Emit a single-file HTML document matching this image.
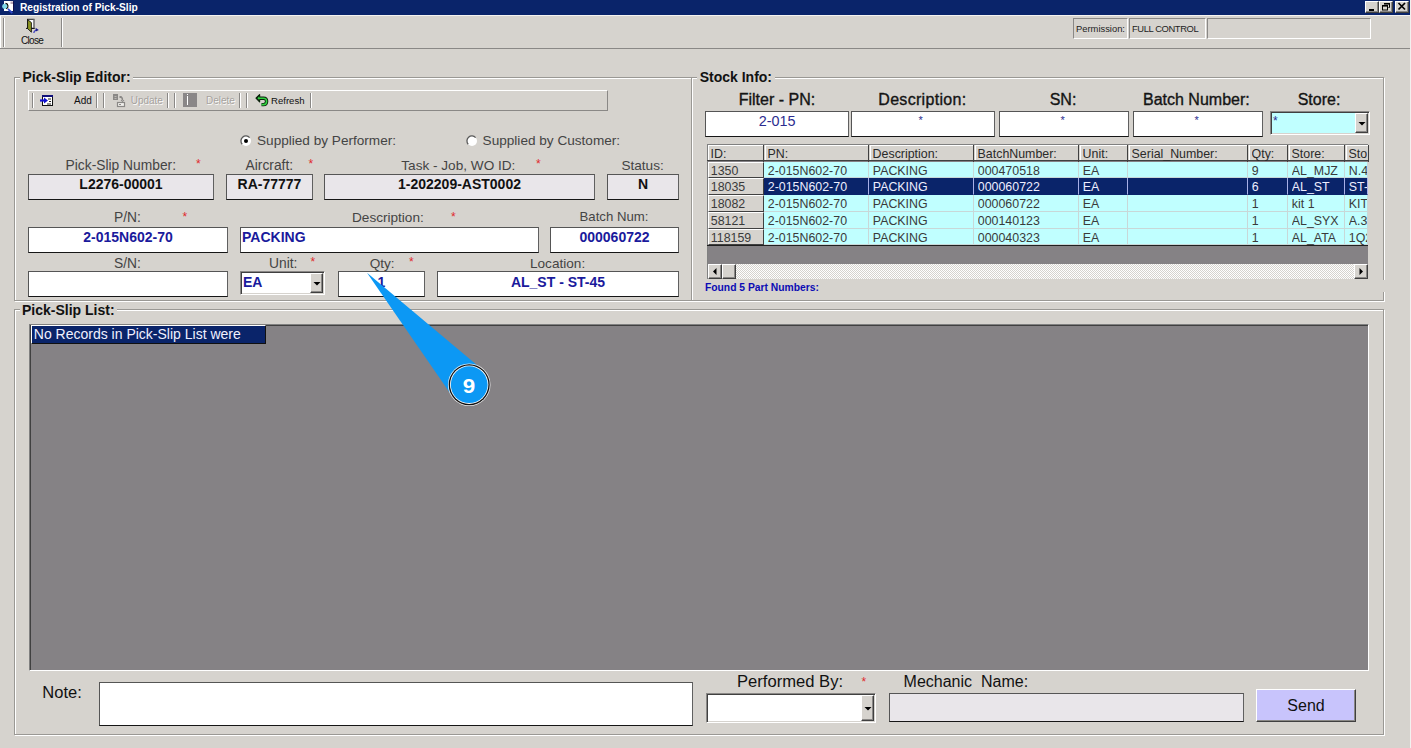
<!DOCTYPE html>
<html><head><meta charset="utf-8"><title>Registration of Pick-Slip</title>
<style>
html,body{margin:0;padding:0;}
body{width:1411px;height:748px;overflow:hidden;background:#d6d3ce;position:relative;font-family:"Liberation Sans",sans-serif;}
.a{position:absolute;}
.t{position:absolute;white-space:nowrap;font-family:"Liberation Sans",sans-serif;}
</style></head><body>

<div class="a" style="left:0px;top:0px;width:1410px;height:15px;background:#0a246a"></div>
<div class="a" style="left:1410px;top:0px;width:1px;height:748px;background:#f2f1ef"></div>
<svg class="a" style="left:0px;top:0px" width="16" height="15">
<rect x="4" y="1" width="9" height="10" fill="#fff"/>
<rect x="13" y="1.5" width="1" height="10" fill="#10104a"/>
<rect x="10.5" y="1.5" width="2.5" height="2.5" fill="#b8a8b8"/>
<circle cx="4.8" cy="6.3" r="2.6" fill="#80d8e8"/>
<path d="M5.5 3.4 A2.8 2.8 0 0 1 6.2 8.8" fill="none" stroke="#000" stroke-width="1.1"/>
<path d="M8 8.8 L12.3 13.2" stroke="#3048c8" stroke-width="1.8"/>
</svg>
<div class="t" style="left:20.00px;top:0.87px;font-size:10.2px;line-height:13px;color:#fff;font-weight:bold;">Registration of Pick-Slip</div>
<div class="a" style="left:1365px;top:1px;width:14px;height:12px;box-sizing:border-box;border:1px solid #fff;border-right-color:#404040;border-bottom-color:#404040;background:#d6d3ce;box-shadow:inset -1px -1px 0 #8a8886"></div>
<div class="a" style="left:1379px;top:1px;width:14px;height:12px;box-sizing:border-box;border:1px solid #fff;border-right-color:#404040;border-bottom-color:#404040;background:#d6d3ce;box-shadow:inset -1px -1px 0 #8a8886"></div>
<div class="a" style="left:1395px;top:1px;width:14px;height:12px;box-sizing:border-box;border:1px solid #fff;border-right-color:#404040;border-bottom-color:#404040;background:#d6d3ce;box-shadow:inset -1px -1px 0 #8a8886"></div>
<div class="a" style="left:1369px;top:9px;width:5px;height:2px;background:#000"></div>
<svg class="a" style="left:1379px;top:0px" width="14" height="13">
<path d="M5.5 3.5 h5 v4 h-1" fill="none" stroke="#000" stroke-width="1"/>
<rect x="5" y="3" width="6" height="1.6" fill="#000"/>
<rect x="3.5" y="5.5" width="5" height="4.5" fill="none" stroke="#000" stroke-width="1"/>
<rect x="3" y="5" width="6" height="1.6" fill="#000"/>
</svg>
<svg class="a" style="left:1395px;top:0px" width="14" height="13">
<path d="M3.5 3 L10 9.5 M10 3 L3.5 9.5" stroke="#000" stroke-width="1.7"/>
</svg>
<div class="a" style="left:0px;top:15px;width:1410px;height:1px;background:#f4f3f1"></div>
<div class="a" style="left:0px;top:16px;width:1px;height:32px;background:#fff"></div>
<div class="a" style="left:0px;top:48px;width:1410px;height:1px;background:#8a8886"></div>
<div class="a" style="left:3px;top:18px;width:1px;height:29px;background:#8a8886"></div>
<div class="a" style="left:4px;top:18px;width:1px;height:29px;background:#fff"></div>
<div class="a" style="left:61px;top:18px;width:1px;height:29px;background:#8a8886"></div>
<div class="a" style="left:62px;top:18px;width:1px;height:29px;background:#fff"></div>
<svg class="a" style="left:20px;top:16px" width="22" height="20">
<rect x="7.5" y="3.3" width="6.5" height="9" fill="#fff" stroke="#222" stroke-width="1"/>
<rect x="13" y="3.5" width="1.6" height="9" fill="#8a8a8a"/>
<path d="M6 12.4 H14.6" stroke="#111" stroke-width="1"/>
<path d="M7.6 3.6 L11.4 6.6 L11.4 16.2 L7.6 12.6 Z" fill="#8e9624" stroke="#111" stroke-width="0.9" stroke-linejoin="round"/>
<path d="M13.8 17 Q14.2 14.2 17 13.8" fill="none" stroke="#4848c0" stroke-width="1.3"/>
<path d="M15.6 11.8 L18.8 13.9 L15.8 15.6 Z" fill="#1c1c8c"/>
</svg>
<div class="t" style="left:21.00px;top:35.14px;font-size:10px;line-height:12px;color:#111;letter-spacing:-0.7px;">Close</div>
<div class="a" style="left:1073px;top:18px;width:55px;height:21px;box-sizing:border-box;border:1px solid #fff;border-top-color:#8a8886;border-left-color:#8a8886"></div>
<div class="a" style="left:1129px;top:18px;width:77px;height:21px;box-sizing:border-box;border:1px solid #fff;border-top-color:#8a8886;border-left-color:#8a8886"></div>
<div class="a" style="left:1207px;top:18px;width:164px;height:21px;box-sizing:border-box;border:1px solid #fff;border-top-color:#8a8886;border-left-color:#8a8886"></div>
<div class="t" style="left:1076.00px;top:23.24px;font-size:9.4px;line-height:12px;color:#222;">Permission:</div>
<div class="t" style="left:1132.00px;top:23.24px;font-size:9.4px;line-height:12px;color:#222;letter-spacing:-0.4px;">FULL CONTROL</div>
<div class="a" style="left:15px;top:78px;width:678px;height:224px;box-sizing:border-box;border:1px solid #fff"></div>
<div class="a" style="left:14px;top:77px;width:678px;height:224px;box-sizing:border-box;border:1px solid #9a9894"></div>
<div class="a" style="left:20px;top:70px;width:113px;height:14px;background:#d6d3ce"></div>
<div class="t" style="left:22.50px;top:67.65px;font-size:14px;line-height:18px;color:#111;font-weight:bold;">Pick-Slip Editor:</div>
<div class="a" style="left:28px;top:90px;width:580px;height:21px;box-sizing:border-box;border:1px solid #fff;border-right-color:#8a8886;border-bottom-color:#8a8886"></div>
<div class="a" style="left:32px;top:93px;width:1px;height:15px;background:#8a8886"></div>
<div class="a" style="left:33px;top:93px;width:1px;height:15px;background:#fff"></div>
<div class="a" style="left:96px;top:93px;width:1px;height:15px;background:#8a8886"></div>
<div class="a" style="left:97px;top:93px;width:1px;height:15px;background:#fff"></div>
<div class="a" style="left:103px;top:93px;width:1px;height:15px;background:#8a8886"></div>
<div class="a" style="left:104px;top:93px;width:1px;height:15px;background:#fff"></div>
<div class="a" style="left:167px;top:93px;width:1px;height:15px;background:#8a8886"></div>
<div class="a" style="left:168px;top:93px;width:1px;height:15px;background:#fff"></div>
<div class="a" style="left:174px;top:93px;width:1px;height:15px;background:#8a8886"></div>
<div class="a" style="left:175px;top:93px;width:1px;height:15px;background:#fff"></div>
<div class="a" style="left:239px;top:93px;width:1px;height:15px;background:#8a8886"></div>
<div class="a" style="left:240px;top:93px;width:1px;height:15px;background:#fff"></div>
<div class="a" style="left:246px;top:93px;width:1px;height:15px;background:#8a8886"></div>
<div class="a" style="left:247px;top:93px;width:1px;height:15px;background:#fff"></div>
<div class="a" style="left:310px;top:93px;width:1px;height:15px;background:#8a8886"></div>
<div class="a" style="left:311px;top:93px;width:1px;height:15px;background:#fff"></div>
<svg class="a" style="left:39px;top:94px" width="16" height="13">
<rect x="3.5" y="1.5" width="10" height="10" fill="#fff" stroke="#111" stroke-width="1"/>
<rect x="3" y="1" width="11" height="2" fill="#10107a"/>
<path d="M9 5 h3 M10 7.5 h2 M8 10 h4" stroke="#222" stroke-width="1"/>
<path d="M1 6.5 H6" stroke="#1010d0" stroke-width="2.2"/>
<path d="M5 3.5 L9 6.5 L5 9.5 Z" fill="#1010d0"/>
</svg>
<div class="t" style="left:74.00px;top:95.33px;font-size:10px;line-height:12px;color:#111;">Add</div>
<svg class="a" style="left:110px;top:92px" width="18" height="16">
<rect x="3" y="2" width="5" height="6" fill="#8a8886"/>
<path d="M4.5 4.5 h2 M4.5 6.5 h2" stroke="#c8c4c0" stroke-width="0.8"/>
<rect x="9.5" y="4" width="2" height="2" fill="#8a8886"/>
<path d="M10.5 5 Q12.5 5 12.5 8.5" fill="none" stroke="#8a8886" stroke-width="1.4"/>
<path d="M11 8 L12.5 9.8 L14 8" fill="none" stroke="#8a8886" stroke-width="1"/>
<rect x="7.5" y="10.5" width="7" height="4" fill="#f0efec" stroke="#8a8886" stroke-width="1.2"/>
<path d="M9 12.5 h2" stroke="#8a8886" stroke-width="1"/>
</svg>
<div class="t" style="left:131.50px;top:95.83px;font-size:10px;line-height:12px;color:#fff;opacity:0.9">Update</div>
<div class="t" style="left:130.70px;top:95.03px;font-size:10px;line-height:12px;color:#a6a29e;">Update</div>
<div class="a" style="left:183px;top:93px;width:14px;height:14px;background:#8a8788"></div>
<div class="a" style="left:187px;top:96px;width:1px;height:9px;background:#fff"></div>
<div class="a" style="left:187px;top:94px;width:1px;height:1px;background:#fff"></div>
<div class="t" style="left:206.80px;top:95.83px;font-size:10px;line-height:12px;color:#fff;opacity:0.9">Delete</div>
<div class="t" style="left:206.00px;top:95.03px;font-size:10px;line-height:12px;color:#a6a29e;">Delete</div>
<svg class="a" style="left:252px;top:92px" width="18" height="16">
<path d="M7 6.2 H11.5 Q14.6 6.2 14.6 9.2 Q14.6 12.6 11.5 12.6 H9.5" fill="none" stroke="#0a200a" stroke-width="3.4"/>
<path d="M4 6.2 L7.6 2.6 L7.6 9.8 Z" fill="#0a200a" stroke="#0a200a" stroke-width="1.2" stroke-linejoin="round"/>
<path d="M7 6.2 H11.5 Q14.6 6.2 14.6 9.2 Q14.6 12.6 11.5 12.6 H9.5" fill="none" stroke="#30d040" stroke-width="1.6"/>
<path d="M5.4 6.2 L7.3 4.3 L7.3 8.1 Z" fill="#30d040"/>
</svg>
<div class="t" style="left:271.00px;top:95.17px;font-size:9.6px;line-height:12px;color:#111;">Refresh</div>
<svg class="a" style="left:240px;top:135px" width="12" height="12">
<circle cx="6" cy="6" r="5" fill="#fff"/>
<path d="M2.2 9.2 A4.6 4.6 0 0 1 9.6 2.6" fill="none" stroke="#5a5a5a" stroke-width="1.3"/>
<circle cx="6" cy="6" r="2" fill="#000"/>
</svg>
<svg class="a" style="left:466px;top:135px" width="12" height="12">
<circle cx="6" cy="6" r="5" fill="#fff"/>
<path d="M2.2 9.2 A4.6 4.6 0 0 1 9.6 2.6" fill="none" stroke="#5a5a5a" stroke-width="1.3"/>

</svg>
<div class="t" style="left:257.00px;top:132.09px;font-size:13.6px;line-height:17px;color:#444444;">Supplied by Performer:</div>
<div class="t" style="left:482.60px;top:132.09px;font-size:13.6px;line-height:17px;color:#444444;">Supplied by Customer:</div>
<div class="t" style="left:65.60px;top:156.72px;font-size:13.8px;line-height:17px;color:#444444;">Pick-Slip Number:</div>
<div class="t" style="left:196px;top:158px;font-size:12px;line-height:12px;color:#e0282c">*</div>
<div class="t" style="left:245.60px;top:156.72px;font-size:13.8px;line-height:17px;color:#444444;">Aircraft:</div>
<div class="t" style="left:308.5px;top:158px;font-size:12px;line-height:12px;color:#e0282c">*</div>
<div class="t" style="left:401.30px;top:156.79px;font-size:13.6px;line-height:17px;color:#444444;">Task - Job, WO ID:</div>
<div class="t" style="left:536px;top:158px;font-size:12px;line-height:12px;color:#e0282c">*</div>
<div class="t" style="left:621.40px;top:156.79px;font-size:13.6px;line-height:17px;color:#444444;">Status:</div>
<div class="a" style="left:28px;top:174px;width:186px;height:26px;box-sizing:border-box;border:1px solid #555;border-bottom-color:#161616;border-right-color:#606060;background:#e9e6ea;"></div>
<div class="a" style="left:226px;top:174px;width:87px;height:26px;box-sizing:border-box;border:1px solid #555;border-bottom-color:#161616;border-right-color:#606060;background:#e9e6ea;"></div>
<div class="a" style="left:324px;top:174px;width:271px;height:26px;box-sizing:border-box;border:1px solid #555;border-bottom-color:#161616;border-right-color:#606060;background:#e9e6ea;"></div>
<div class="a" style="left:607px;top:174px;width:72px;height:26px;box-sizing:border-box;border:1px solid #555;border-bottom-color:#161616;border-right-color:#606060;background:#e9e6ea;"></div>
<div class="t" style="left:28.00px;top:175.45px;font-size:14px;line-height:18px;color:#111;font-weight:bold;width:186.00px;text-align:center;">L2276-00001</div>
<div class="t" style="left:226.00px;top:175.45px;font-size:14px;line-height:18px;color:#111;font-weight:bold;width:87.00px;text-align:center;">RA-77777</div>
<div class="t" style="left:324.00px;top:175.45px;font-size:14px;line-height:18px;color:#111;font-weight:bold;width:271.00px;text-align:center;">1-202209-AST0002</div>
<div class="t" style="left:607.00px;top:175.45px;font-size:14px;line-height:18px;color:#111;font-weight:bold;width:72.00px;text-align:center;">N</div>
<div class="t" style="left:114.00px;top:208.72px;font-size:13.8px;line-height:17px;color:#444444;">P/N:</div>
<div class="t" style="left:182.5px;top:211px;font-size:12px;line-height:12px;color:#e0282c">*</div>
<div class="t" style="left:352.00px;top:208.79px;font-size:13.6px;line-height:17px;color:#444444;">Description:</div>
<div class="t" style="left:451px;top:211px;font-size:12px;line-height:12px;color:#e0282c">*</div>
<div class="t" style="left:579.50px;top:209.43px;font-size:13.2px;line-height:16px;color:#444444;">Batch Num:</div>
<div class="a" style="left:28px;top:227px;width:200px;height:26px;box-sizing:border-box;border:1px solid #555;border-bottom-color:#161616;border-right-color:#606060;background:#fff;"></div>
<div class="a" style="left:240px;top:227px;width:299px;height:26px;box-sizing:border-box;border:1px solid #555;border-bottom-color:#161616;border-right-color:#606060;background:#fff;"></div>
<div class="a" style="left:550px;top:227px;width:129px;height:26px;box-sizing:border-box;border:1px solid #555;border-bottom-color:#161616;border-right-color:#606060;background:#fff;"></div>
<div class="t" style="left:28.00px;top:227.95px;font-size:14px;line-height:18px;color:#1a1a9c;font-weight:bold;width:200.00px;text-align:center;">2-015N602-70</div>
<div class="t" style="left:242.00px;top:227.95px;font-size:14px;line-height:18px;color:#1a1a9c;font-weight:bold;">PACKING</div>
<div class="t" style="left:550.00px;top:227.95px;font-size:14px;line-height:18px;color:#1a1a9c;font-weight:bold;width:129.00px;text-align:center;">000060722</div>
<div class="t" style="left:114.00px;top:254.72px;font-size:13.8px;line-height:17px;color:#444444;">S/N:</div>
<div class="t" style="left:269.00px;top:254.72px;font-size:13.8px;line-height:17px;color:#444444;">Unit:</div>
<div class="t" style="left:310.5px;top:256px;font-size:12px;line-height:12px;color:#e0282c">*</div>
<div class="t" style="left:369.70px;top:254.79px;font-size:13.6px;line-height:17px;color:#444444;">Qty:</div>
<div class="t" style="left:409px;top:256px;font-size:12px;line-height:12px;color:#e0282c">*</div>
<div class="t" style="left:530.00px;top:254.79px;font-size:13.6px;line-height:17px;color:#444444;">Location:</div>
<div class="a" style="left:28px;top:271px;width:200px;height:26px;box-sizing:border-box;border:1px solid #555;border-bottom-color:#161616;border-right-color:#606060;background:#fff;"></div>
<div class="a" style="left:240px;top:271px;width:85px;height:24px;box-sizing:border-box;border:1px solid #fff;border-top-color:#8a8886;border-left-color:#8a8886;background:#fff;box-shadow:inset 1px 1px 0 #404040, inset -1px -1px 0 #d6d3ce"></div>
<div class="a" style="left:310px;top:273px;width:13px;height:20px;box-sizing:border-box;border:1px solid #fff;border-right-color:#404040;border-bottom-color:#404040;background:#d6d3ce;box-shadow:inset -1px -1px 0 #8a8886"></div>
<svg class="a" style="left:312.5px;top:280.5px" width="8" height="5"><path d="M0.5 1 H7.5 L4 4.5 Z" fill="#000"/></svg>
<div class="a" style="left:338px;top:271px;width:87px;height:26px;box-sizing:border-box;border:1px solid #555;border-bottom-color:#161616;border-right-color:#606060;background:#fff;"></div>
<div class="a" style="left:437px;top:271px;width:242px;height:26px;box-sizing:border-box;border:1px solid #555;border-bottom-color:#161616;border-right-color:#606060;background:#fff;"></div>
<div class="t" style="left:243.00px;top:272.95px;font-size:14px;line-height:18px;color:#1a1a9c;font-weight:bold;">EA</div>
<div class="t" style="left:338.00px;top:272.95px;font-size:14px;line-height:18px;color:#1a1a9c;font-weight:bold;width:87.00px;text-align:center;">1</div>
<div class="t" style="left:437.00px;top:272.95px;font-size:14px;line-height:18px;color:#1a1a9c;font-weight:bold;width:242.00px;text-align:center;">AL_ST - ST-45</div>
<div class="a" style="left:692px;top:78px;width:693px;height:224px;box-sizing:border-box;border:1px solid #fff"></div>
<div class="a" style="left:691px;top:77px;width:693px;height:224px;box-sizing:border-box;border:1px solid #9a9894"></div>
<div class="a" style="left:1382px;top:280px;width:3px;height:12px;background:#d6d3ce"></div>
<div class="a" style="left:697px;top:70px;width:78px;height:14px;background:#d6d3ce"></div>
<div class="t" style="left:699.70px;top:67.85px;font-size:14px;line-height:18px;color:#111;font-weight:bold;">Stock Info:</div>
<div class="t" style="left:738.70px;top:90.26px;font-size:16px;line-height:20px;color:#141414;-webkit-text-stroke:0.35px #141414">Filter - PN:</div>
<div class="t" style="left:878.30px;top:90.26px;font-size:16px;line-height:20px;color:#141414;-webkit-text-stroke:0.35px #141414;letter-spacing:0.3px">Description:</div>
<div class="t" style="left:1049.70px;top:90.26px;font-size:16px;line-height:20px;color:#141414;-webkit-text-stroke:0.35px #141414">SN:</div>
<div class="t" style="left:1143.00px;top:90.26px;font-size:16px;line-height:20px;color:#141414;-webkit-text-stroke:0.35px #141414">Batch Number:</div>
<div class="t" style="left:1297.70px;top:90.26px;font-size:16px;line-height:20px;color:#141414;-webkit-text-stroke:0.35px #141414">Store:</div>
<div class="a" style="left:705px;top:111px;width:144px;height:26px;box-sizing:border-box;border:1px solid #555;border-bottom-color:#161616;border-right-color:#606060;background:#fff;"></div>
<div class="a" style="left:851px;top:111px;width:144px;height:26px;box-sizing:border-box;border:1px solid #555;border-bottom-color:#161616;border-right-color:#606060;background:#fff;"></div>
<div class="a" style="left:999px;top:111px;width:130px;height:26px;box-sizing:border-box;border:1px solid #555;border-bottom-color:#161616;border-right-color:#606060;background:#fff;"></div>
<div class="a" style="left:1133px;top:111px;width:130px;height:26px;box-sizing:border-box;border:1px solid #555;border-bottom-color:#161616;border-right-color:#606060;background:#fff;"></div>
<div class="a" style="left:1270px;top:111px;width:100px;height:24px;box-sizing:border-box;border:1px solid #fff;border-top-color:#8a8886;border-left-color:#8a8886;background:#c0ffff;box-shadow:inset 1px 1px 0 #404040, inset -1px -1px 0 #d6d3ce"></div>
<div class="a" style="left:1355px;top:113px;width:13px;height:20px;box-sizing:border-box;border:1px solid #fff;border-right-color:#404040;border-bottom-color:#404040;background:#d6d3ce;box-shadow:inset -1px -1px 0 #8a8886"></div>
<svg class="a" style="left:1357.5px;top:120.5px" width="8" height="5"><path d="M0.5 1 H7.5 L4 4.5 Z" fill="#000"/></svg>
<div class="t" style="left:758.80px;top:111.71px;font-size:14.4px;line-height:18px;color:#2c2c90;">2-015</div>
<div class="t" style="left:918.5px;top:115px;font-size:11px;line-height:11px;color:#2c2c90">*</div>
<div class="t" style="left:1060.5px;top:115px;font-size:11px;line-height:11px;color:#2c2c90">*</div>
<div class="t" style="left:1194.5px;top:115px;font-size:11px;line-height:11px;color:#2c2c90">*</div>
<div class="t" style="left:1273px;top:115px;font-size:12px;line-height:12px;color:#2c2c90">*</div>
<div class="a" style="left:707px;top:144px;width:661px;height:120px;background:#858285"></div>
<div class="a" style="left:707px;top:144px;width:661px;height:17px;background:#d6d3ce;border-top:1px solid #808080;box-sizing:border-box"></div>
<div class="a" style="left:707px;top:144px;width:1px;height:120px;background:#808080"></div>
<div class="a" style="left:708px;top:145px;width:56px;height:16px;box-sizing:border-box;border-left:1px solid #fff;border-top:1px solid #fff"></div>
<div class="a" style="left:763px;top:145px;width:1px;height:17px;background:#404040"></div>
<div class="a" style="left:765px;top:145px;width:104px;height:16px;box-sizing:border-box;border-left:1px solid #fff;border-top:1px solid #fff"></div>
<div class="a" style="left:868px;top:145px;width:1px;height:17px;background:#404040"></div>
<div class="a" style="left:870px;top:145px;width:104px;height:16px;box-sizing:border-box;border-left:1px solid #fff;border-top:1px solid #fff"></div>
<div class="a" style="left:973px;top:145px;width:1px;height:17px;background:#404040"></div>
<div class="a" style="left:975px;top:145px;width:104px;height:16px;box-sizing:border-box;border-left:1px solid #fff;border-top:1px solid #fff"></div>
<div class="a" style="left:1078px;top:145px;width:1px;height:17px;background:#404040"></div>
<div class="a" style="left:1080px;top:145px;width:48px;height:16px;box-sizing:border-box;border-left:1px solid #fff;border-top:1px solid #fff"></div>
<div class="a" style="left:1127px;top:145px;width:1px;height:17px;background:#404040"></div>
<div class="a" style="left:1129px;top:145px;width:119px;height:16px;box-sizing:border-box;border-left:1px solid #fff;border-top:1px solid #fff"></div>
<div class="a" style="left:1247px;top:145px;width:1px;height:17px;background:#404040"></div>
<div class="a" style="left:1249px;top:145px;width:39px;height:16px;box-sizing:border-box;border-left:1px solid #fff;border-top:1px solid #fff"></div>
<div class="a" style="left:1287px;top:145px;width:1px;height:17px;background:#404040"></div>
<div class="a" style="left:1289px;top:145px;width:56px;height:16px;box-sizing:border-box;border-left:1px solid #fff;border-top:1px solid #fff"></div>
<div class="a" style="left:1344px;top:145px;width:1px;height:17px;background:#404040"></div>
<div class="a" style="left:1346px;top:145px;width:22px;height:16px;box-sizing:border-box;border-left:1px solid #fff;border-top:1px solid #fff"></div>
<div class="a" style="left:1368px;top:145px;width:1px;height:17px;background:#404040"></div>
<div class="a" style="left:707px;top:160px;width:661px;height:1px;background:#404040"></div>
<div class="a" style="left:708px;top:161.5px;width:56px;height:16.75px;box-sizing:border-box;background:#d6d3ce;border-top:1px solid #fff;border-left:1px solid #fff;border-bottom:1px solid #404040;border-right:1px solid #404040"></div>
<div class="a" style="left:764px;top:161.5px;width:105px;height:16.75px;box-sizing:border-box;background:#c0ffff;border-right:1px solid #c8d8d8;border-bottom:1px solid #c8d8d8"></div>
<div class="a" style="left:869px;top:161.5px;width:105px;height:16.75px;box-sizing:border-box;background:#c0ffff;border-right:1px solid #c8d8d8;border-bottom:1px solid #c8d8d8"></div>
<div class="a" style="left:974px;top:161.5px;width:105px;height:16.75px;box-sizing:border-box;background:#c0ffff;border-right:1px solid #c8d8d8;border-bottom:1px solid #c8d8d8"></div>
<div class="a" style="left:1079px;top:161.5px;width:49px;height:16.75px;box-sizing:border-box;background:#c0ffff;border-right:1px solid #c8d8d8;border-bottom:1px solid #c8d8d8"></div>
<div class="a" style="left:1128px;top:161.5px;width:120px;height:16.75px;box-sizing:border-box;background:#c0ffff;border-right:1px solid #c8d8d8;border-bottom:1px solid #c8d8d8"></div>
<div class="a" style="left:1248px;top:161.5px;width:40px;height:16.75px;box-sizing:border-box;background:#c0ffff;border-right:1px solid #c8d8d8;border-bottom:1px solid #c8d8d8"></div>
<div class="a" style="left:1288px;top:161.5px;width:57px;height:16.75px;box-sizing:border-box;background:#c0ffff;border-right:1px solid #c8d8d8;border-bottom:1px solid #c8d8d8"></div>
<div class="a" style="left:1345px;top:161.5px;width:23px;height:16.75px;box-sizing:border-box;background:#c0ffff;border-right:1px solid #c8d8d8;border-bottom:1px solid #c8d8d8"></div>
<div class="a" style="left:708px;top:178.25px;width:56px;height:16.75px;box-sizing:border-box;background:#d6d3ce;border-top:1px solid #fff;border-left:1px solid #fff;border-bottom:1px solid #404040;border-right:1px solid #404040"></div>
<div class="a" style="left:764px;top:178.25px;width:105px;height:16.75px;box-sizing:border-box;background:#0a246a;border-right:1px solid #a8b0e8;border-bottom:1px solid #0a246a"></div>
<div class="a" style="left:869px;top:178.25px;width:105px;height:16.75px;box-sizing:border-box;background:#0a246a;border-right:1px solid #a8b0e8;border-bottom:1px solid #0a246a"></div>
<div class="a" style="left:974px;top:178.25px;width:105px;height:16.75px;box-sizing:border-box;background:#0a246a;border-right:1px solid #a8b0e8;border-bottom:1px solid #0a246a"></div>
<div class="a" style="left:1079px;top:178.25px;width:49px;height:16.75px;box-sizing:border-box;background:#0a246a;border-right:1px solid #a8b0e8;border-bottom:1px solid #0a246a"></div>
<div class="a" style="left:1128px;top:178.25px;width:120px;height:16.75px;box-sizing:border-box;background:#0a246a;border-right:1px solid #a8b0e8;border-bottom:1px solid #0a246a"></div>
<div class="a" style="left:1248px;top:178.25px;width:40px;height:16.75px;box-sizing:border-box;background:#0a246a;border-right:1px solid #a8b0e8;border-bottom:1px solid #0a246a"></div>
<div class="a" style="left:1288px;top:178.25px;width:57px;height:16.75px;box-sizing:border-box;background:#0a246a;border-right:1px solid #a8b0e8;border-bottom:1px solid #0a246a"></div>
<div class="a" style="left:1345px;top:178.25px;width:23px;height:16.75px;box-sizing:border-box;background:#0a246a;border-right:1px solid #a8b0e8;border-bottom:1px solid #0a246a"></div>
<div class="a" style="left:708px;top:195.0px;width:56px;height:16.75px;box-sizing:border-box;background:#d6d3ce;border-top:1px solid #fff;border-left:1px solid #fff;border-bottom:1px solid #404040;border-right:1px solid #404040"></div>
<div class="a" style="left:764px;top:195.0px;width:105px;height:16.75px;box-sizing:border-box;background:#c0ffff;border-right:1px solid #c8d8d8;border-bottom:1px solid #c8d8d8"></div>
<div class="a" style="left:869px;top:195.0px;width:105px;height:16.75px;box-sizing:border-box;background:#c0ffff;border-right:1px solid #c8d8d8;border-bottom:1px solid #c8d8d8"></div>
<div class="a" style="left:974px;top:195.0px;width:105px;height:16.75px;box-sizing:border-box;background:#c0ffff;border-right:1px solid #c8d8d8;border-bottom:1px solid #c8d8d8"></div>
<div class="a" style="left:1079px;top:195.0px;width:49px;height:16.75px;box-sizing:border-box;background:#c0ffff;border-right:1px solid #c8d8d8;border-bottom:1px solid #c8d8d8"></div>
<div class="a" style="left:1128px;top:195.0px;width:120px;height:16.75px;box-sizing:border-box;background:#c0ffff;border-right:1px solid #c8d8d8;border-bottom:1px solid #c8d8d8"></div>
<div class="a" style="left:1248px;top:195.0px;width:40px;height:16.75px;box-sizing:border-box;background:#c0ffff;border-right:1px solid #c8d8d8;border-bottom:1px solid #c8d8d8"></div>
<div class="a" style="left:1288px;top:195.0px;width:57px;height:16.75px;box-sizing:border-box;background:#c0ffff;border-right:1px solid #c8d8d8;border-bottom:1px solid #c8d8d8"></div>
<div class="a" style="left:1345px;top:195.0px;width:23px;height:16.75px;box-sizing:border-box;background:#c0ffff;border-right:1px solid #c8d8d8;border-bottom:1px solid #c8d8d8"></div>
<div class="a" style="left:708px;top:211.75px;width:56px;height:16.75px;box-sizing:border-box;background:#d6d3ce;border-top:1px solid #fff;border-left:1px solid #fff;border-bottom:1px solid #404040;border-right:1px solid #404040"></div>
<div class="a" style="left:764px;top:211.75px;width:105px;height:16.75px;box-sizing:border-box;background:#c0ffff;border-right:1px solid #c8d8d8;border-bottom:1px solid #c8d8d8"></div>
<div class="a" style="left:869px;top:211.75px;width:105px;height:16.75px;box-sizing:border-box;background:#c0ffff;border-right:1px solid #c8d8d8;border-bottom:1px solid #c8d8d8"></div>
<div class="a" style="left:974px;top:211.75px;width:105px;height:16.75px;box-sizing:border-box;background:#c0ffff;border-right:1px solid #c8d8d8;border-bottom:1px solid #c8d8d8"></div>
<div class="a" style="left:1079px;top:211.75px;width:49px;height:16.75px;box-sizing:border-box;background:#c0ffff;border-right:1px solid #c8d8d8;border-bottom:1px solid #c8d8d8"></div>
<div class="a" style="left:1128px;top:211.75px;width:120px;height:16.75px;box-sizing:border-box;background:#c0ffff;border-right:1px solid #c8d8d8;border-bottom:1px solid #c8d8d8"></div>
<div class="a" style="left:1248px;top:211.75px;width:40px;height:16.75px;box-sizing:border-box;background:#c0ffff;border-right:1px solid #c8d8d8;border-bottom:1px solid #c8d8d8"></div>
<div class="a" style="left:1288px;top:211.75px;width:57px;height:16.75px;box-sizing:border-box;background:#c0ffff;border-right:1px solid #c8d8d8;border-bottom:1px solid #c8d8d8"></div>
<div class="a" style="left:1345px;top:211.75px;width:23px;height:16.75px;box-sizing:border-box;background:#c0ffff;border-right:1px solid #c8d8d8;border-bottom:1px solid #c8d8d8"></div>
<div class="a" style="left:708px;top:228.5px;width:56px;height:16.75px;box-sizing:border-box;background:#d6d3ce;border-top:1px solid #fff;border-left:1px solid #fff;border-bottom:1px solid #404040;border-right:1px solid #404040"></div>
<div class="a" style="left:764px;top:228.5px;width:105px;height:16.75px;box-sizing:border-box;background:#c0ffff;border-right:1px solid #c8d8d8;border-bottom:1px solid #c8d8d8"></div>
<div class="a" style="left:869px;top:228.5px;width:105px;height:16.75px;box-sizing:border-box;background:#c0ffff;border-right:1px solid #c8d8d8;border-bottom:1px solid #c8d8d8"></div>
<div class="a" style="left:974px;top:228.5px;width:105px;height:16.75px;box-sizing:border-box;background:#c0ffff;border-right:1px solid #c8d8d8;border-bottom:1px solid #c8d8d8"></div>
<div class="a" style="left:1079px;top:228.5px;width:49px;height:16.75px;box-sizing:border-box;background:#c0ffff;border-right:1px solid #c8d8d8;border-bottom:1px solid #c8d8d8"></div>
<div class="a" style="left:1128px;top:228.5px;width:120px;height:16.75px;box-sizing:border-box;background:#c0ffff;border-right:1px solid #c8d8d8;border-bottom:1px solid #c8d8d8"></div>
<div class="a" style="left:1248px;top:228.5px;width:40px;height:16.75px;box-sizing:border-box;background:#c0ffff;border-right:1px solid #c8d8d8;border-bottom:1px solid #c8d8d8"></div>
<div class="a" style="left:1288px;top:228.5px;width:57px;height:16.75px;box-sizing:border-box;background:#c0ffff;border-right:1px solid #c8d8d8;border-bottom:1px solid #c8d8d8"></div>
<div class="a" style="left:1345px;top:228.5px;width:23px;height:16.75px;box-sizing:border-box;background:#c0ffff;border-right:1px solid #c8d8d8;border-bottom:1px solid #c8d8d8"></div>
<div class="t" style="left:710.60px;top:145.70px;font-size:12.4px;line-height:16px;color:#2a2a2a;overflow:hidden;width:52px">ID:</div>
<div class="t" style="left:767.60px;top:145.70px;font-size:12.4px;line-height:16px;color:#2a2a2a;overflow:hidden;width:100px">PN:</div>
<div class="t" style="left:872.60px;top:145.70px;font-size:12.4px;line-height:16px;color:#2a2a2a;overflow:hidden;width:100px">Description:</div>
<div class="t" style="left:977.60px;top:145.70px;font-size:12.4px;line-height:16px;color:#2a2a2a;overflow:hidden;width:100px">BatchNumber:</div>
<div class="t" style="left:1082.60px;top:145.70px;font-size:12.4px;line-height:16px;color:#2a2a2a;overflow:hidden;width:44px">Unit:</div>
<div class="t" style="left:1131.60px;top:145.70px;font-size:12.4px;line-height:16px;color:#2a2a2a;overflow:hidden;width:115px">Serial_Number:</div>
<div class="t" style="left:1251.60px;top:145.70px;font-size:12.4px;line-height:16px;color:#2a2a2a;overflow:hidden;width:35px">Qty:</div>
<div class="t" style="left:1291.60px;top:145.70px;font-size:12.4px;line-height:16px;color:#2a2a2a;overflow:hidden;width:52px">Store:</div>
<div class="t" style="left:1348.60px;top:145.70px;font-size:12.4px;line-height:16px;color:#2a2a2a;overflow:hidden;width:18px">Sto</div>
<div class="t" style="left:710.80px;top:162.50px;font-size:12.4px;line-height:16px;color:#3a3a3a;overflow:hidden;width:52px">1350</div>
<div class="t" style="left:767.80px;top:162.50px;font-size:12.4px;line-height:16px;color:#3a3a3a;overflow:hidden;width:100px">2-015N602-70</div>
<div class="t" style="left:872.80px;top:162.50px;font-size:12.4px;line-height:16px;color:#3a3a3a;overflow:hidden;width:100px">PACKING</div>
<div class="t" style="left:977.80px;top:162.50px;font-size:12.4px;line-height:16px;color:#3a3a3a;overflow:hidden;width:100px">000470518</div>
<div class="t" style="left:1082.80px;top:162.50px;font-size:12.4px;line-height:16px;color:#3a3a3a;overflow:hidden;width:44px">EA</div>
<div class="t" style="left:1251.80px;top:162.50px;font-size:12.4px;line-height:16px;color:#3a3a3a;overflow:hidden;width:35px">9</div>
<div class="t" style="left:1291.80px;top:162.50px;font-size:12.4px;line-height:16px;color:#3a3a3a;overflow:hidden;width:52px">AL_MJZ</div>
<div class="t" style="left:1348.80px;top:162.50px;font-size:12.4px;line-height:16px;color:#3a3a3a;overflow:hidden;width:18px">N.4</div>
<div class="t" style="left:710.80px;top:179.25px;font-size:12.4px;line-height:16px;color:#3a3a3a;overflow:hidden;width:52px">18035</div>
<div class="t" style="left:767.80px;top:179.25px;font-size:12.4px;line-height:16px;color:#eef;overflow:hidden;width:100px">2-015N602-70</div>
<div class="t" style="left:872.80px;top:179.25px;font-size:12.4px;line-height:16px;color:#eef;overflow:hidden;width:100px">PACKING</div>
<div class="t" style="left:977.80px;top:179.25px;font-size:12.4px;line-height:16px;color:#eef;overflow:hidden;width:100px">000060722</div>
<div class="t" style="left:1082.80px;top:179.25px;font-size:12.4px;line-height:16px;color:#eef;overflow:hidden;width:44px">EA</div>
<div class="t" style="left:1251.80px;top:179.25px;font-size:12.4px;line-height:16px;color:#eef;overflow:hidden;width:35px">6</div>
<div class="t" style="left:1291.80px;top:179.25px;font-size:12.4px;line-height:16px;color:#eef;overflow:hidden;width:52px">AL_ST</div>
<div class="t" style="left:1348.80px;top:179.25px;font-size:12.4px;line-height:16px;color:#eef;overflow:hidden;width:18px">ST-</div>
<div class="t" style="left:710.80px;top:196.00px;font-size:12.4px;line-height:16px;color:#3a3a3a;overflow:hidden;width:52px">18082</div>
<div class="t" style="left:767.80px;top:196.00px;font-size:12.4px;line-height:16px;color:#3a3a3a;overflow:hidden;width:100px">2-015N602-70</div>
<div class="t" style="left:872.80px;top:196.00px;font-size:12.4px;line-height:16px;color:#3a3a3a;overflow:hidden;width:100px">PACKING</div>
<div class="t" style="left:977.80px;top:196.00px;font-size:12.4px;line-height:16px;color:#3a3a3a;overflow:hidden;width:100px">000060722</div>
<div class="t" style="left:1082.80px;top:196.00px;font-size:12.4px;line-height:16px;color:#3a3a3a;overflow:hidden;width:44px">EA</div>
<div class="t" style="left:1251.80px;top:196.00px;font-size:12.4px;line-height:16px;color:#3a3a3a;overflow:hidden;width:35px">1</div>
<div class="t" style="left:1291.80px;top:196.00px;font-size:12.4px;line-height:16px;color:#3a3a3a;overflow:hidden;width:52px">kit 1</div>
<div class="t" style="left:1348.80px;top:196.00px;font-size:12.4px;line-height:16px;color:#3a3a3a;overflow:hidden;width:18px">KIT</div>
<div class="t" style="left:710.80px;top:212.75px;font-size:12.4px;line-height:16px;color:#3a3a3a;overflow:hidden;width:52px">58121</div>
<div class="t" style="left:767.80px;top:212.75px;font-size:12.4px;line-height:16px;color:#3a3a3a;overflow:hidden;width:100px">2-015N602-70</div>
<div class="t" style="left:872.80px;top:212.75px;font-size:12.4px;line-height:16px;color:#3a3a3a;overflow:hidden;width:100px">PACKING</div>
<div class="t" style="left:977.80px;top:212.75px;font-size:12.4px;line-height:16px;color:#3a3a3a;overflow:hidden;width:100px">000140123</div>
<div class="t" style="left:1082.80px;top:212.75px;font-size:12.4px;line-height:16px;color:#3a3a3a;overflow:hidden;width:44px">EA</div>
<div class="t" style="left:1251.80px;top:212.75px;font-size:12.4px;line-height:16px;color:#3a3a3a;overflow:hidden;width:35px">1</div>
<div class="t" style="left:1291.80px;top:212.75px;font-size:12.4px;line-height:16px;color:#3a3a3a;overflow:hidden;width:52px">AL_SYX</div>
<div class="t" style="left:1348.80px;top:212.75px;font-size:12.4px;line-height:16px;color:#3a3a3a;overflow:hidden;width:18px">A.3</div>
<div class="t" style="left:710.80px;top:229.50px;font-size:12.4px;line-height:16px;color:#3a3a3a;overflow:hidden;width:52px">118159</div>
<div class="t" style="left:767.80px;top:229.50px;font-size:12.4px;line-height:16px;color:#3a3a3a;overflow:hidden;width:100px">2-015N602-70</div>
<div class="t" style="left:872.80px;top:229.50px;font-size:12.4px;line-height:16px;color:#3a3a3a;overflow:hidden;width:100px">PACKING</div>
<div class="t" style="left:977.80px;top:229.50px;font-size:12.4px;line-height:16px;color:#3a3a3a;overflow:hidden;width:100px">000040323</div>
<div class="t" style="left:1082.80px;top:229.50px;font-size:12.4px;line-height:16px;color:#3a3a3a;overflow:hidden;width:44px">EA</div>
<div class="t" style="left:1251.80px;top:229.50px;font-size:12.4px;line-height:16px;color:#3a3a3a;overflow:hidden;width:35px">1</div>
<div class="t" style="left:1291.80px;top:229.50px;font-size:12.4px;line-height:16px;color:#3a3a3a;overflow:hidden;width:52px">AL_ATA</div>
<div class="t" style="left:1348.80px;top:229.50px;font-size:12.4px;line-height:16px;color:#3a3a3a;overflow:hidden;width:18px">1Q2</div>
<div class="a" style="left:707px;top:244.75px;width:661px;height:1px;background:#202020"></div>
<div class="a" style="left:707px;top:264px;width:661px;height:15px;background-color:#f2f1ef;background-image:repeating-conic-gradient(#d6d3ce 0% 25%, #fff 0% 50%);background-size:2px 2px"></div>
<div class="a" style="left:707px;top:264px;width:1px;height:15px;background:#808080"></div>
<div class="a" style="left:708px;top:264px;width:14px;height:15px;box-sizing:border-box;border:1px solid #fff;border-right-color:#404040;border-bottom-color:#404040;background:#d6d3ce;box-shadow:inset -1px -1px 0 #8a8886"></div>
<svg class="a" style="left:708px;top:264px" width="14" height="15"><path d="M5 7.5 L8.5 4 V11 Z" fill="#000"/></svg>
<div class="a" style="left:722px;top:264px;width:14px;height:15px;box-sizing:border-box;border:1px solid #fff;border-right-color:#404040;border-bottom-color:#404040;background:#d6d3ce;box-shadow:inset -1px -1px 0 #8a8886"></div>
<div class="a" style="left:1354px;top:264px;width:14px;height:15px;box-sizing:border-box;border:1px solid #fff;border-right-color:#404040;border-bottom-color:#404040;background:#d6d3ce;box-shadow:inset -1px -1px 0 #8a8886"></div>
<svg class="a" style="left:1354px;top:264px" width="14" height="15"><path d="M9 7.5 L5.5 4 V11 Z" fill="#000"/></svg>
<div class="t" style="left:705.00px;top:281.23px;font-size:10.3px;line-height:13px;color:#0c0cb4;font-weight:bold;">Found 5 Part Numbers:</div>
<div class="a" style="left:15px;top:310px;width:1370px;height:426px;box-sizing:border-box;border:1px solid #fff"></div>
<div class="a" style="left:14px;top:309px;width:1370px;height:426px;box-sizing:border-box;border:1px solid #9a9894"></div>
<div class="a" style="left:20px;top:302px;width:97px;height:14px;background:#d6d3ce"></div>
<div class="t" style="left:22.00px;top:301.15px;font-size:14px;line-height:18px;color:#111;font-weight:bold;">Pick-Slip List:</div>
<div class="a" style="left:29px;top:324px;width:1340px;height:347px;box-sizing:border-box;background:#858285;border:1px solid #fff;border-top-color:#808080;border-left-color:#808080"></div>
<div class="a" style="left:30px;top:325px;width:1338px;height:1px;background:#404040"></div>
<div class="a" style="left:30px;top:325px;width:1px;height:345px;background:#404040"></div>
<div class="a" style="left:31px;top:325px;width:235px;height:19px;box-sizing:border-box;background:#0a246a;border-top:1px solid #fff;border-left:1px solid #fff;border-right:1px solid #101010;border-bottom:1px solid #101010"></div>
<div class="t" style="left:33.80px;top:325.05px;font-size:14px;line-height:18px;color:#f0f0ff;">No Records in Pick-Slip List were</div>
<div class="t" style="left:42.30px;top:681.98px;font-size:16.5px;line-height:21px;color:#111;">Note:</div>
<div class="a" style="left:99px;top:682px;width:594px;height:44px;box-sizing:border-box;border:1px solid #555;border-bottom-color:#161616;border-right-color:#606060;background:#fff;"></div>
<div class="t" style="left:737.00px;top:671.05px;font-size:16.6px;line-height:21px;color:#111;">Performed By:</div>
<div class="t" style="left:861.5px;top:675.5px;font-size:12px;line-height:12px;color:#e0282c">*</div>
<div class="a" style="left:706px;top:693px;width:170px;height:30px;box-sizing:border-box;border:1px solid #fff;border-top-color:#8a8886;border-left-color:#8a8886;background:#fff;box-shadow:inset 1px 1px 0 #404040, inset -1px -1px 0 #d6d3ce"></div>
<div class="a" style="left:861px;top:695px;width:13px;height:26px;box-sizing:border-box;border:1px solid #fff;border-right-color:#404040;border-bottom-color:#404040;background:#d6d3ce;box-shadow:inset -1px -1px 0 #8a8886"></div>
<svg class="a" style="left:863.5px;top:705.5px" width="8" height="5"><path d="M0.5 1 H7.5 L4 4.5 Z" fill="#000"/></svg>
<div class="t" style="left:903.60px;top:671.76px;font-size:16px;line-height:20px;color:#111;">Mechanic&nbsp; Name:</div>
<div class="a" style="left:889px;top:693px;width:355px;height:29px;box-sizing:border-box;border:1px solid #555;border-bottom-color:#161616;border-right-color:#606060;background:#e9e6ea;"></div>
<div class="a" style="left:1256px;top:689px;width:100px;height:33px;box-sizing:border-box;background:#c8c4fc;border:1px solid #fff;border-right-color:#404040;border-bottom-color:#404040;box-shadow:inset -1px -1px 0 #8a8886"></div>
<div class="t" style="left:1256.00px;top:695.96px;font-size:16px;line-height:20px;color:#111;width:100.00px;text-align:center;">Send</div>
<svg class="a" style="left:0px;top:0px" width="1411" height="748">
<path d="M367 272.8 L452.2 396.3 L481.9 369.3 Z" fill="#0c98f4"/>
<circle cx="469.2" cy="384.7" r="21.3" fill="#fff" fill-opacity="0.85"/>
<circle cx="469.2" cy="384.7" r="20.5" fill="#111"/>
<circle cx="469.2" cy="384.7" r="19.2" fill="#fff"/>
<circle cx="469.2" cy="384.7" r="18.4" fill="#0c98f4"/>
</svg>
<div class="t" style="left:458.20px;top:373.97px;font-size:20px;line-height:25px;color:#fff;font-weight:bold;width:22.00px;text-align:center;transform:scaleX(1.12)">9</div>
</body></html>
